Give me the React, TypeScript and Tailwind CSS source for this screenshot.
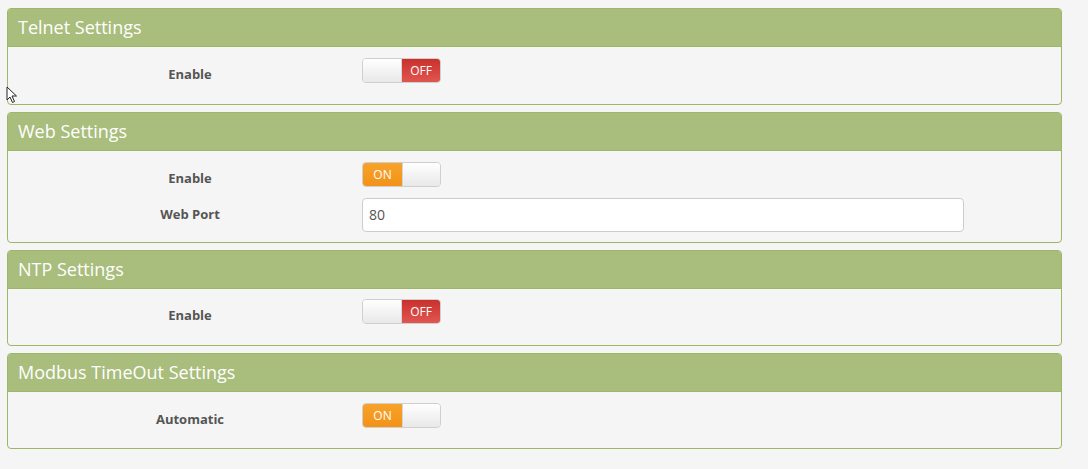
import React from "react";

// Settings page: four green-headed panels with toggle switches and a port field.

function Toggle({ on }: { on: boolean }) {
  return (
    <div className="flex w-[79px] h-[25px] rounded-[4px] border border-[#cfcfcf] overflow-hidden text-[12px] leading-[23px] text-white">
      {on ? (
        <>
          <div className="w-[39px] text-center bg-gradient-to-b from-[#f7a22a] to-[#f39217]">ON</div>
          <div className="flex-1 bg-gradient-to-b from-[#ffffff] to-[#e8e8e8] border-l border-[#d6d6d6]" />
        </>
      ) : (
        <>
          <div className="w-[39px] bg-gradient-to-b from-[#ffffff] to-[#e8e8e8] border-r border-[#d6d6d6]" />
          <div className="flex-1 text-center bg-gradient-to-b from-[#c9302c] to-[#e05550]">OFF</div>
        </>
      )}
    </div>
  );
}

function Row({ label, children }: { label: string; children: React.ReactNode }) {
  return (
    <div className="flex items-start">
      <div className="w-[340px] pl-[24px] pt-[7px] leading-[19px] text-center text-[13px] font-bold text-[#555555]">
        {label}
      </div>
      <div className="pl-[14px]">{children}</div>
    </div>
  );
}

function Panel({
  title,
  children,
  bodyClass,
}: {
  title: string;
  children: React.ReactNode;
  bodyClass: string;
}) {
  return (
    <div className="w-[1055px] rounded-[4px] border border-[#9db668] bg-[#f4f5f4] overflow-hidden">
      <div className="h-[38px] bg-[#a9bd7c] border-b border-[#9db668] px-[10px] text-[18px] leading-[36px] text-white">
        {title}
      </div>
      <div className={bodyClass}>{children}</div>
    </div>
  );
}

export default function App() {
  return (
    <div
      className="relative w-[1088px] h-[469px] bg-[#f4f5f4] pl-[7px] pt-[8px] flex flex-col gap-[7px]"
      style={{ fontFamily: '"Open Sans", "Noto Sans", sans-serif' }}
    >
      <Panel title="Telnet Settings" bodyClass="pt-[11px] pb-[20px]">
        <Row label="Enable">
          <Toggle on={false} />
        </Row>
      </Panel>

      <Panel title="Web Settings" bodyClass="pt-[11px] pb-[10px] flex flex-col gap-[10px]">
        <Row label="Enable">
          <Toggle on />
        </Row>
        <Row label="Web Port">
          <div className="w-[602px] h-[34px] rounded-[4px] border border-[#cccccc] bg-white px-[6px] text-[14px] leading-[32px] text-[#555555]">
            80
          </div>
        </Row>
      </Panel>

      <Panel title="NTP Settings" bodyClass="pt-[10px] pb-[20px]">
        <Row label="Enable">
          <Toggle on={false} />
        </Row>
      </Panel>

      <Panel title="Modbus TimeOut Settings" bodyClass="pt-[11px] pb-[19px]">
        <Row label="Automatic">
          <Toggle on />
        </Row>
      </Panel>

      {/* mouse pointer left in the capture */}
      <svg className="absolute left-[6px] top-[86px]" width="13" height="18" viewBox="0 0 13 18">
        <path d="M1 1 L1 14 L4 11 L6.5 16.5 L8.5 15.5 L6 10 L10.5 10 Z" fill="white" stroke="#222" strokeWidth="1" strokeLinejoin="round" />
      </svg>
    </div>
  );
}
